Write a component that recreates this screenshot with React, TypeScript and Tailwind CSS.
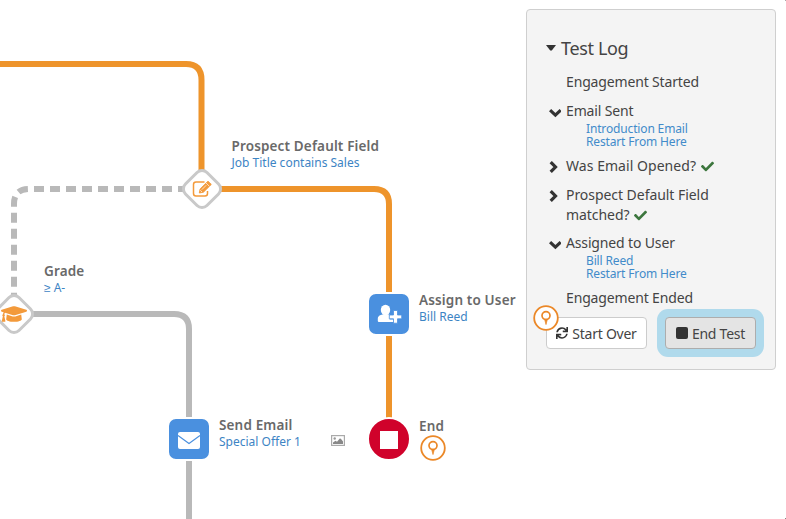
import React from "react";
import { FaCheck, FaGraduationCap, FaSync } from "react-icons/fa";

const Pin = ({ className }: { className: string }) => (
  <svg viewBox="0 0 26 26" className={`absolute h-[26px] w-[26px] ${className}`} fill="none" stroke="#eb8828">
    <circle cx="13" cy="13" r="11.8" fill="#fff" strokeWidth="1.8" />
    <circle cx="13" cy="10.6" r="4" strokeWidth="1.7" />
    <path d="M11.6 14.2h2.8L13 19.6z" fill="#eb8828" strokeWidth=".7" />
  </svg>
);

const Chevron = ({ open }: { open?: boolean }) => (
  <svg viewBox="0 0 12 12" className={`-ml-px mr-[5px] h-3 w-3 shrink-0 ${open ? "mt-1" : "mt-0.5"}`} fill="none" stroke="#333" strokeWidth="3.2">
    {open ? <path d="M1.1 3.2 6.400 8.1 11.700 3.2" /> : <path d="M1.700 1.1 6.500 6 1.700 10.9" />}
  </svg>
);

const Entry = ({ open, icon = true, children, links }: { open?: boolean; icon?: boolean; children: React.ReactNode; links?: string[] }) => (
  <div>
    <div className="flex items-start leading-5">
      {icon ? <div className="flex h-5 items-center"><Chevron open={open} /></div> : <div className="w-4" />}
      <div>{children}</div>
    </div>
    {links && (
      <div className="flex flex-col pt-px pl-9 text-[12px] leading-[13px] tracking-[-0.15px] text-[#428bca]">
        {links.map((l) => <a key={l}>{l}</a>)}
      </div>
    )}
  </div>
);

const Check = () => <FaCheck className="ml-px inline h-[13px] w-[13px] align-[-2px] text-[#3c763d]" />;

const Label = ({ title, sub, className }: { title: string; sub?: string; className: string }) => (
  <div className={`absolute whitespace-nowrap ${className}`}>
    <div className="text-[13.5px] leading-[18px] font-semibold tracking-[0.15px] text-[#696969]">{title}</div>
    {sub && <div className="text-[12px] leading-4 text-[#3d84c4]">{sub}</div>}
  </div>
);

const Diamond = ({ className, children }: { className: string; children: React.ReactNode }) => (
  <div className={`absolute flex h-[42px] w-[42px] items-center justify-center ${className}`}>
    <svg viewBox="0 0 42 42" className="absolute inset-0">
      <rect x="5.8" y="5.8" width="30.4" height="30.4" rx="7" transform="rotate(45 21 21)" fill="#fff" stroke="#c9c9c9" strokeWidth="3" />
    </svg>
    <div className="relative">{children}</div>
  </div>
);

export default function App() {
  return (
    <div className="relative h-[519px] w-[786px] overflow-hidden bg-white font-['Noto_Sans',sans-serif] text-[#444]">
      <svg width="786" height="519" className="absolute inset-0" fill="none" strokeWidth="6">
        <path d="M0 64H186Q201.500 64 201.500 80V189" stroke="#ee942b" />
        <path d="M202 189H374Q389 189 389 204V439" stroke="#ee942b" />
        <path d="M202 189H29Q14 189 14 204V314" stroke="#b9b9b9" strokeDasharray="10 6" strokeDashoffset="2" />
        <path d="M14 314H174Q189 314 189 329V519" stroke="#b9b9b9" />
      </svg>

      <Diamond className="top-[168px] left-[181px]">
        <svg width="21" height="18" viewBox="0 0 21 18" fill="none" stroke="#f39a3b">
          <path d="M12.500 2H4Q1.500 2 1.500 4.500v9Q1.500 16 4 16h9q2.500 0 2.500-2.500V11" strokeWidth="1.5" />
          <path d="m7.300 13 .8-4L16 1.200l3.300 3.200-7.900 7.800z" fill="#f39a3b" strokeWidth=".9" />
          <path d="m14 3 3.400 3.300M9.800 9.700l4.500-4.500M8.300 10.300l1.700 1.700" stroke="#fff" strokeWidth=".7" />
        </svg>
      </Diamond>
      <Diamond className="top-[293px] left-[-7px]">
        <FaGraduationCap className="h-[22px] w-[26px] text-[#f39a3b]" />
      </Diamond>

      <div className="absolute top-[292px] left-[367px] flex h-11 w-11 items-center justify-center rounded-[9px] border-2 border-white bg-[#4a90df]">
        <svg width="25" height="20" viewBox="0 0 25 20" fill="#fff">
          <ellipse cx="8.500" cy="6" rx="4.700" ry="5.200" />
          <path d="M.8 17v-2.500q0-2.500 3-3.500l2.500-.8q2.200 1.600 4.400 0l2 .6v4.700h4V18H2q-1.200 0-1.200-1z" />
          <path d="M16.500 6.500h4V11h4.200v3.800h-4.200v4.400h-4v-4.400h-4.200V11h4.200z" stroke="#4a90df" strokeWidth=".8" />
        </svg>
      </div>
      <div className="absolute top-[417px] left-[167px] flex h-11 w-11 items-center justify-center rounded-[9px] border-2 border-white bg-[#4a90df]">
        <svg width="22" height="17" viewBox="0 0 22 17" className="mt-0.5">
          <rect width="22" height="17" rx="2" fill="#fff" />
          <path d="m0 3.500 11 8L22 3.500" fill="none" stroke="#4a90df" strokeWidth="1.100" />
        </svg>
      </div>
      <div className="absolute top-[417px] left-[367px] flex h-11 w-11 items-center justify-center rounded-full border-2 border-white bg-[#d0022b]">
        <div className="mt-px h-[18px] w-[18px] bg-white" />
      </div>

      <Label className="top-[137px] left-[231.5px]" title="Prospect Default Field" sub="Job Title contains Sales" />
      <Label className="top-[262px] left-[44px]" title="Grade" sub="≥ A-" />
      <Label className="top-[291px] left-[419px]" title="Assign to User" sub="Bill Reed" />
      <Label className="top-[416px] left-[219px]" title="Send Email" sub="Special Offer 1" />
      <Label className="top-[417px] left-[419px]" title="End" />
      <svg className="absolute top-[435px] left-[331px]" width="14" height="11" viewBox="0 0 14 11">
        <rect x=".6" y=".6" width="12.800" height="9.800" fill="#fff" stroke="#aaa" strokeWidth="1.200" />
        <path d="M2 9V7.500l2.500-1.700L6 6.800l3-3.500 1.500 1.200L12 6.500V9z" fill="#888" />
        <circle cx="3.700" cy="3.500" r="1.200" fill="#999" />
      </svg>
      <Pin className="top-[435px] left-[419.500px]" />

      <section className="relative mt-[9px] ml-[526px] flex h-[361px] w-[250px] flex-col rounded border border-[#cfcfcf] bg-[#f4f4f4] pr-4 pl-[19px] text-[14px]">
        <h2 className="mt-[26px] flex h-6 items-center text-[18px] leading-6 tracking-[-0.35px]">
          <svg width="10" height="6" viewBox="0 0 10 6" className="mr-[5px]"><path d="M0 0h10L5.800 5.500H4.200z" fill="#333" /></svg>
          Test Log
        </h2>
        <div className="mt-3 flex flex-col gap-[9px] pl-1 tracking-[-0.15px]">
          <Entry icon={false}>Engagement Started</Entry>
          <div className="-mb-px"><Entry open links={["Introduction Email", "Restart From Here"]}>Email Sent</Entry></div>
          <Entry><span className="tracking-[0.05px]">Was Email Opened?</span> <Check /></Entry>
          <div className="-mb-px"><Entry><span className="tracking-[-0.05px]">Prospect Default Field<br />matched?</span> <Check /></Entry></div>
          <div className="-mb-px"><Entry open links={["Bill Reed", "Restart From Here"]}>Assigned to User</Entry></div>
          <Entry icon={false}>Engagement Ended</Entry>
        </div>
        <div className="mt-[9px] flex gap-[18px] whitespace-nowrap tracking-[-0.25px]">
          <button className="flex h-8 w-[101px] items-center justify-center gap-1 rounded border border-[#ccc] bg-white">
            <FaSync className="h-3 w-3 text-[#333]" />Start Over
          </button>
          <button className="flex h-8 w-[91px] items-center justify-center gap-1 rounded border border-[#adadad] bg-[#e4e4e4] ring-8 ring-[#b0daec]">
            <span className="h-3 w-3 rounded-[2px] bg-[#333]" />End Test
          </button>
        </div>
      </section>
      <Pin className="top-[305px] left-[533px]" />
      <i className="absolute top-0 right-0 h-px w-px bg-[#aaa]" />
      <i className="absolute right-0 bottom-0 h-px w-px bg-[#888]" />
    </div>
  );
}
